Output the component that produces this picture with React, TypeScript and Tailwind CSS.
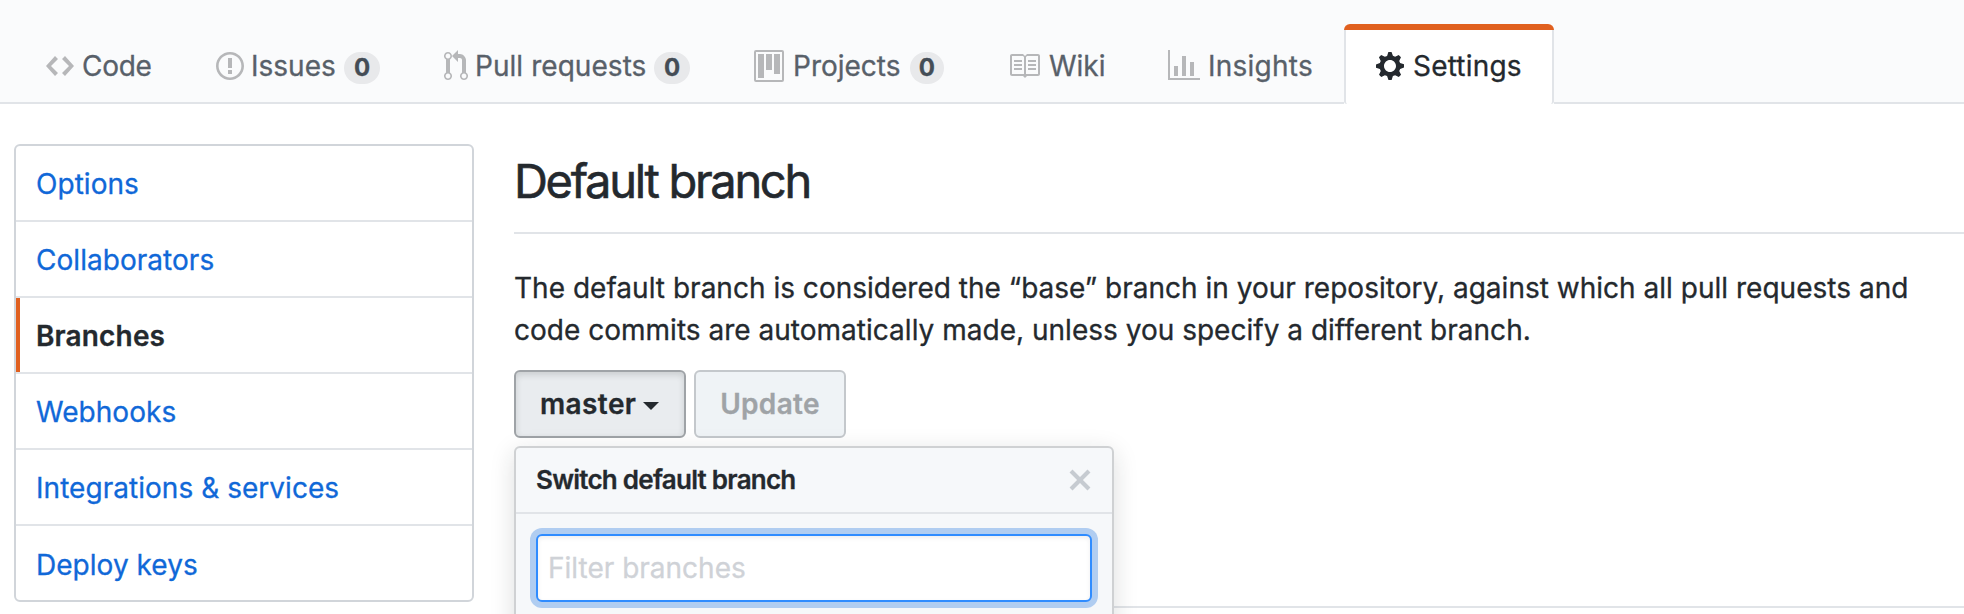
import type { ReactNode } from "react";

type IconProps = { d: string; w: number; className?: string };

function Icon({ d, w, className = "" }: IconProps) {
  return (
    <svg
      width={w * 2}
      height={32}
      viewBox={`0 0 ${w} 16`}
      fill="currentColor"
      fillRule="evenodd"
      aria-hidden="true"
      className={`shrink-0 ${className}`}
    >
      <path d={d} />
    </svg>
  );
}

const icons = {
  code: "M9.5 3L8 4.5 11.5 8 8 11.5 9.5 13 14 8 9.5 3zm-5 0L0 8l4.5 5L6 11.5 2.5 8 6 4.5 4.5 3z",
  issue:
    "M7 2.3c3.14 0 5.7 2.56 5.7 5.7s-2.56 5.7-5.7 5.7A5.71 5.71 0 0 1 1.3 8c0-3.14 2.56-5.7 5.7-5.7zM7 1C3.14 1 0 4.14 0 8s3.14 7 7 7 7-3.14 7-7-3.14-7-7-7zm1 3H6v5h2V4zm0 6H6v2h2v-2z",
  pull: "M11 11.28V5c-.03-.78-.34-1.47-.94-2.06C9.46 2.35 8.78 2.03 8 2H7V0L4 3l3 3V4h1c.27.02.48.11.69.31.21.2.3.42.31.69v6.28A1.993 1.993 0 0 0 10 15a1.993 1.993 0 0 0 1-3.72zm-1 2.92c-.66 0-1.2-.55-1.2-1.2 0-.65.55-1.2 1.2-1.2.65 0 1.2.55 1.2 1.2 0 .65-.55 1.2-1.2 1.2zM4 3c0-1.11-.89-2-2-2a1.993 1.993 0 0 0-1 3.72v6.56A1.993 1.993 0 0 0 2 15a1.993 1.993 0 0 0 1-3.72V4.72c.59-.34 1-.98 1-1.72zm-.8 10c0 .66-.55 1.2-1.2 1.2-.65 0-1.2-.55-1.2-1.2 0-.65.55-1.2 1.2-1.2.65 0 1.2.55 1.2 1.2zM2 4.2C1.34 4.2.8 3.65.8 3c0-.65.55-1.2 1.2-1.2.65 0 1.2.55 1.2 1.2 0 .65-.55 1.2-1.2 1.2z",
  project:
    "M10 12h3V2h-3v10zm-4-2h3V2H6v8zm-4 4h3V2H2v12zm-1 1h13V1H1v14zM14 0H1a1 1 0 0 0-1 1v14a1 1 0 0 0 1 1h13a1 1 0 0 0 1-1V1a1 1 0 0 0-1-1z",
  book: "M3 5h4v1H3V5zm0 3h4V7H3v1zm0 2h4V9H3v1zm11-5h-4v1h4V5zm0 2h-4v1h4V7zm0 2h-4v1h4V9zm2-6v9c0 .55-.45 1-1 1H9.5l-1 1-1-1H2c-.55 0-1-.45-1-1V3c0-.55.45-1 1-1h5.5l1 1 1-1H15c.55 0 1 .45 1 1zm-8 .5L7.5 3H2v9h6V3.5zm7-.5H9.5l-.5.5V12h6V3z",
  graph: "M16 14v1H0V0h1v14h15zM5 13H3V8h2v5zm4 0H7V3h2v10zm4 0h-2V6h2v7z",
  gear: "M14 8.77v-1.6l-1.94-.64-.45-1.09.88-1.84-1.13-1.13-1.81.91-1.09-.45-.69-1.92h-1.6l-.63 1.94-1.11.45-1.84-.88-1.13 1.13.91 1.81-.45 1.09L0 7.23v1.59l1.94.64.45 1.09-.88 1.84 1.13 1.13 1.81-.91 1.09.45.69 1.92h1.59l.63-1.94 1.11-.45 1.84.88 1.13-1.13-.92-1.81.47-1.09L14 8.75v.02zM7 11c-1.66 0-3-1.34-3-3s1.34-3 3-3 3 1.34 3 3-1.34 3-3 3z",
  x: "M7.48 8l3.75 3.75-1.48 1.48L6 9.48l-3.75 3.75-1.48-1.48L4.52 8 .77 4.25l1.48-1.48L6 6.52l3.75-3.75 1.48 1.48z",
};

type TabProps = { icon: string; iconW: number; className: string; count?: number; children: ReactNode };

function Tab({ icon, iconW, className, count, children }: TabProps) {
  return (
    <a className={`flex shrink-0 items-start pt-[26px] pl-8 whitespace-nowrap text-[#586069] ${className}`}>
      <Icon d={icon} w={iconW} className="text-[#b6b7b9]" />
      <span className="leading-[32px]">{children}</span>
      {count !== undefined && (
        <span className="mt-0.5 mr-8 ml-auto flex h-8 w-9 items-center justify-center rounded-full bg-[#e8e9eb] text-[24px] font-bold text-[#444d56]">
          {count}
        </span>
      )}
    </a>
  );
}

const menu = ["Options", "Collaborators", "Branches", "Webhooks", "Integrations & services", "Deploy keys"];

export default function App() {
  return (
    <div className="flex h-[614px] w-[1964px] flex-col overflow-hidden bg-white font-['Inter',sans-serif] text-[28px] text-[#24292e] [-webkit-text-stroke:0.3px]">
      <nav className="flex h-[104px] shrink-0 border-b-2 border-[#e1e4e8] bg-[#fafbfc] pt-6 pl-3.5">
        <Tab icon={icons.code} iconW={14} className="w-[170px] gap-2 tracking-[-0.3px]">Code</Tab>
        <Tab icon={icons.issue} iconW={14} className="w-[228px] gap-[7px]" count={0}>Issues</Tab>
        <Tab icon={icons.pull} iconW={12} className="w-[310px] gap-[7px] tracking-[0.05px]" count={0}>Pull requests</Tab>
        <Tab icon={icons.project} iconW={15} className="w-[254px] gap-[9px]" count={0}>Projects</Tab>
        <Tab icon={icons.book} iconW={16} className="w-[160px] gap-[9px]">Wiki</Tab>
        <Tab icon={icons.graph} iconW={16} className="w-[208px] gap-2 tracking-[0.25px]">Insights</Tab>
        <a className="flex h-20 w-[210px] shrink-0 flex-col overflow-hidden rounded-t-md bg-white">
          <span className="h-1.5 shrink-0 bg-[#e0601f]" />
          <span className="flex grow items-start gap-[9px] rounded-b-[3px] border-x-2 border-[#e1e4e8] pt-5 pl-[30px]">
            <Icon d={icons.gear} w={14} />
            <span className="leading-[32px] tracking-[0.2px]">Settings</span>
          </span>
        </a>
      </nav>

      <div className="flex grow pt-10 pl-3.5">
        <aside className="flex h-[458px] w-[460px] shrink-0 flex-col divide-y-2 divide-[#e1e4e8] overflow-hidden rounded-md border-2 border-[#d1d5da]">
          {menu.map((item) =>
            item === "Branches" ? (
              <a key={item} className="flex h-[76px] shrink-0 items-center font-semibold tracking-[0.15px]">
                <span className="mr-4 w-1 self-stretch bg-[#e0601f]" />
                <span className="pt-0.5">{item}</span>
              </a>
            ) : (
              <a key={item} className="flex h-[76px] shrink-0 items-center pt-0.5 pl-5 tracking-[0.04px] text-[#1068d8]">
                {item}
              </a>
            ),
          )}
        </aside>

        <main className="ml-10 flex grow flex-col">
          <h2 className="h-[90px] shrink-0 border-b-2 border-[#e1e4e8] pt-[9px] text-[47px] leading-[56px] tracking-[-2.3px] [-webkit-text-stroke:0.6px]">
            Default branch
          </h2>
          <p className="mt-[33px] leading-[42px] tracking-[0.015px] whitespace-nowrap">
            The default branch is considered the “base” branch in your repository, against which all pull requests and
            <br />
            code commits are automatically made, unless you specify a different branch.
          </p>
          <div className="mt-[19px] flex gap-2">
            <button className="flex h-[68px] w-[172px] items-center rounded-md border-2 border-[#9fa3a7] bg-[#e9ecef] pl-6 font-semibold tracking-[0.4px] shadow-[inset_0_3px_6px_rgba(27,31,35,0.15)]">
              master
              <span className="mt-1 ml-[7px] border-x-8 border-t-8 border-x-transparent border-t-[#24292e]" />
            </button>
            <button className="flex h-[68px] w-[152px] items-center justify-center rounded-md border-2 border-[#c4c8cc] bg-[#eff3f6] font-semibold tracking-[0.3px] text-[#9fa3a7]">
              Update
            </button>
          </div>
          <div className="relative mt-[168px] h-0.5 shrink-0 bg-[#e1e4e8]">
            <section className="absolute -top-40 left-0 h-60 w-[600px] rounded-md border-2 border-[#cfd1d3] bg-[#f6f8fa] shadow-[0_6px_24px_rgba(27,31,35,0.15)]">
              <header className="flex h-[66px] items-center justify-between border-b-2 border-[#e1e4e8] px-5 text-[26px] font-semibold tracking-[-0.75px]">
                <span className="pb-0.5">Switch default branch</span>
                <Icon d={icons.x} w={12} className="text-[#c6cbd1]" />
              </header>
              <div className="px-5 pt-5">
                <div className="flex h-[68px] items-center rounded-md border-2 border-[#2f8cff] bg-white pl-2.5 text-[#cfd2d7] shadow-[inset_0_2px_4px_rgba(27,31,35,0.075),0_0_0_6px_#b0cdf1]">
                  Filter branches
                </div>
              </div>
            </section>
          </div>
        </main>
      </div>
    </div>
  );
}
